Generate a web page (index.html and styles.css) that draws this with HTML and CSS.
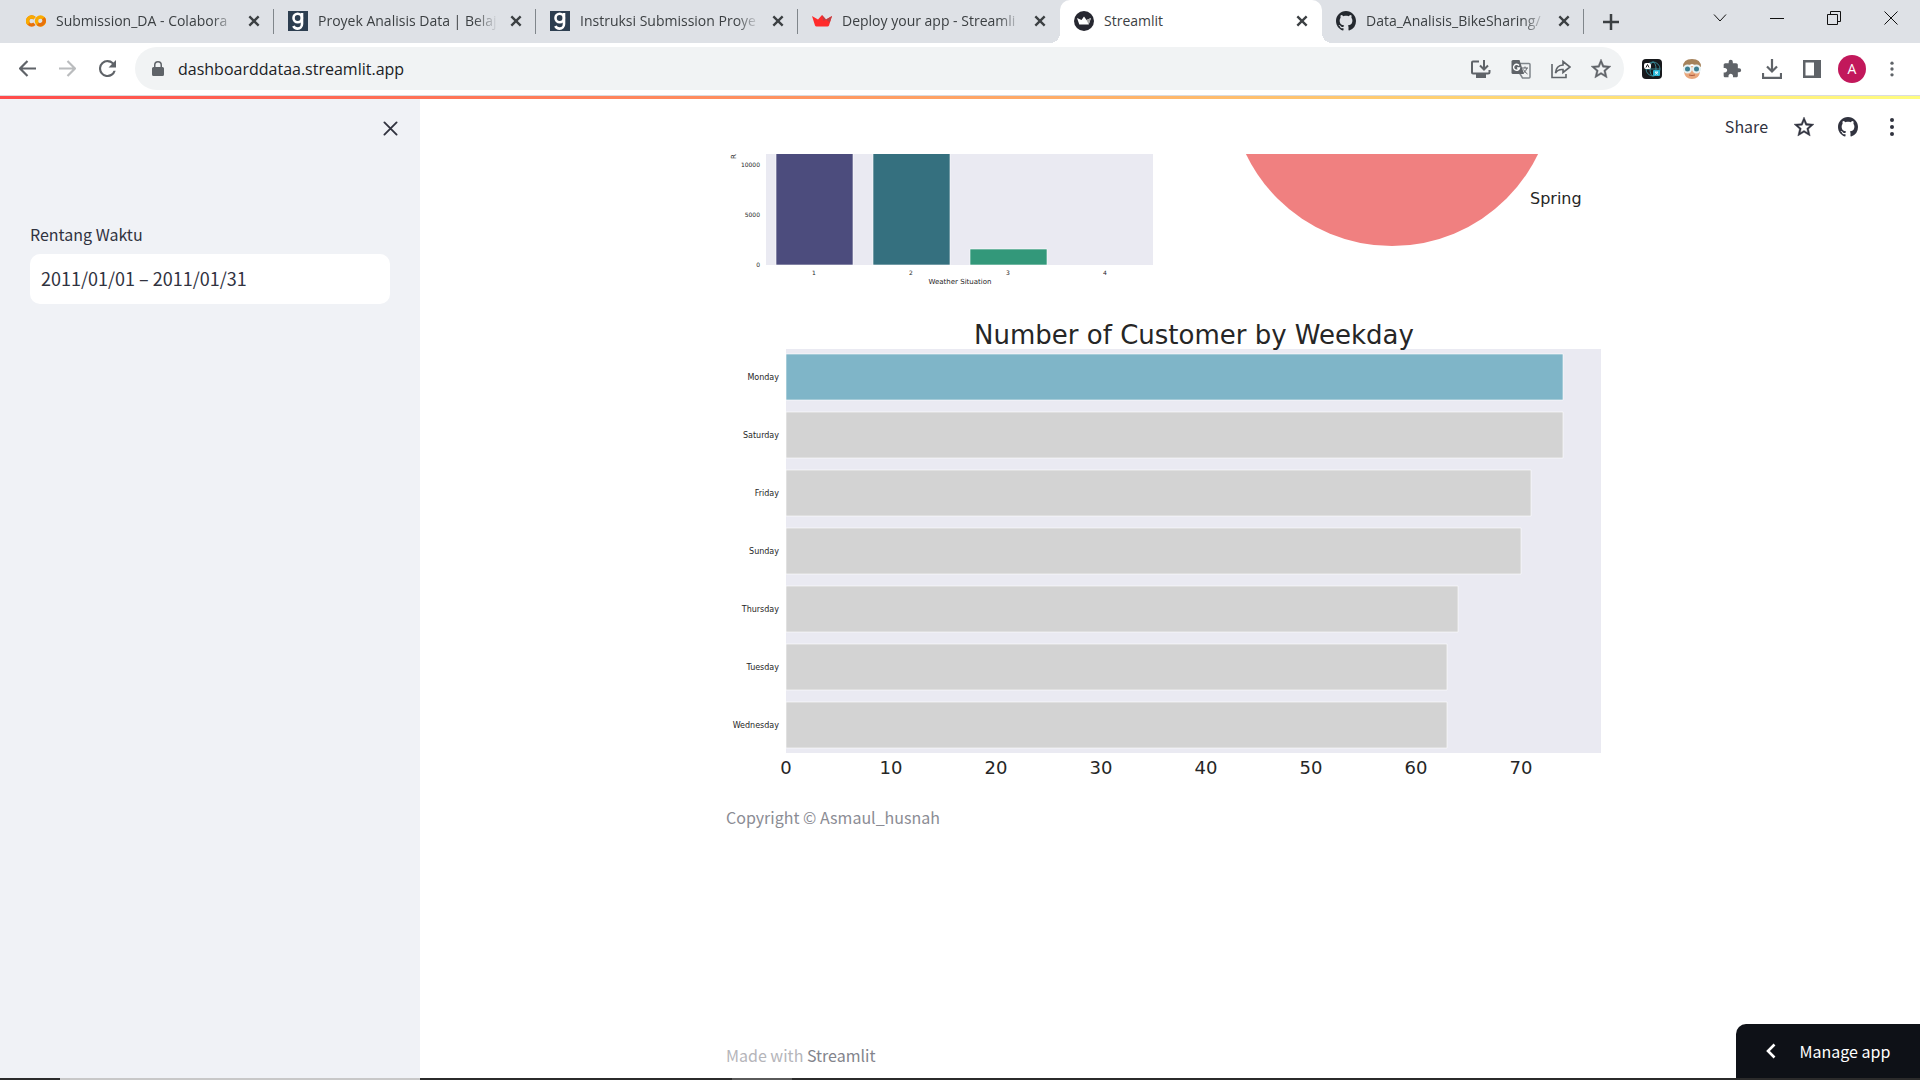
FILE: index.html
```html
<!DOCTYPE html>
<html lang="id">
<head>
<meta charset="utf-8">
<title>Streamlit</title>
<link rel="stylesheet" href="styles.css">
</head>
<body>
<svg class="defs" aria-hidden="true">
  <symbol id="x" viewBox="0 0 12 12"><path d="M2 2l8 8M10 2l-8 8" fill="none" stroke="currentColor" stroke-width="2"/></symbol>
  <symbol id="github" viewBox="0 0 16 16"><path fill="currentColor" d="M8 0C3.58 0 0 3.58 0 8c0 3.54 2.29 6.53 5.47 7.59.4.07.55-.17.55-.38 0-.19-.01-.82-.01-1.49-2.01.37-2.53-.49-2.69-.94-.09-.23-.48-.94-.82-1.13-.28-.15-.68-.52-.01-.53.63-.01 1.08.58 1.23.82.72 1.21 1.87.87 2.33.66.07-.52.28-.87.51-1.07-1.78-.2-3.64-.89-3.64-3.95 0-.87.31-1.59.82-2.15-.08-.2-.36-1.02.08-2.12 0 0 .67-.21 2.2.82.64-.18 1.32-.27 2-.27s1.36.09 2 .27c1.53-1.04 2.2-.82 2.2-.82.44 1.1.16 1.92.08 2.12.51.56.82 1.27.82 2.15 0 3.07-1.87 3.75-3.65 3.95.29.25.54.73.54 1.48 0 1.07-.01 1.93-.01 2.2 0 .21.15.46.55.38A8.01 8.01 0 0 0 16 8c0-4.42-3.58-8-8-8z"/></symbol>
  <symbol id="star" viewBox="0 0 24 24"><path fill="currentColor" stroke="currentColor" stroke-width=".4" d="M22 9.24l-7.19-.62L12 2 9.19 8.63 2 9.24l5.46 4.73L5.82 21 12 17.27 18.18 21l-1.63-7.03L22 9.24zM12 15.4l-3.76 2.27 1-4.28-3.32-2.88 4.38-.38L12 6.1l1.71 4.04 4.38.38-3.32 2.88 1 4.28L12 15.4z"/></symbol>
  <symbol id="dots" viewBox="0 0 24 24"><g fill="currentColor"><circle cx="12" cy="5" r="2"/><circle cx="12" cy="12" r="2"/><circle cx="12" cy="19" r="2"/></g></symbol>
  <symbol id="dicoding" viewBox="0 0 20 20"><path fill="#2d3e50" d="M0 0h20v20H0z"/><g fill="none" stroke="#fff" stroke-width="2.6"><circle cx="9.7" cy="7" r="4.2"/><path d="M14 2v11c0 3-2 4.600-4.300 4.600-2.200 0-3.700-1-4.300-2.600"/></g></symbol>
</svg>

<header class="browser">
  <nav class="tabs" aria-label="Tabs">
    <div class="tab"><svg class="fav" viewBox="0 0 20 20"><g fill="none" stroke-width="3.400"><circle cx="14.500" cy="10" r="4" stroke="#f9ab00"/><path d="M8.500 7.200A4 4 0 1 0 8.500 12.800" stroke="#e8710a"/><path d="M2.700 12.800A4 4 0 0 1 8.500 7.200" stroke="#f9ab00"/><path d="M17.300 7.200A4 4 0 0 1 11.700 12.800" stroke="#e8710a"/></g></svg><span class="name fade">Submission_DA - Colabora</span><button class="close" aria-label="Close tab"><svg><use href="#x"/></svg></button></div>
    <div class="tab"><svg class="fav"><use href="#dicoding"/></svg><span class="name fade">Proyek Analisis Data | Belaj</span><button class="close" aria-label="Close tab"><svg><use href="#x"/></svg></button></div>
    <div class="tab"><svg class="fav"><use href="#dicoding"/></svg><span class="name fade">Instruksi Submission Proye</span><button class="close" aria-label="Close tab"><svg><use href="#x"/></svg></button></div>
    <div class="tab last"><svg class="fav" viewBox="0 0 20 20"><path fill="#ff2b2b" d="M0 5l6 3.500 4-4.500 4 4.500L20 5l-3 9.500q-.4 1-1.500 1h-11q-1 0-1.500-1z"/><path fill="#bd4043" d="M10 4l4 4.500-2.500 1.500zM20 5l-6 3.500 3.800 3z"/></svg><span class="name fade">Deploy your app - Streamli</span><button class="close" aria-label="Close tab"><svg><use href="#x"/></svg></button></div>
    <div class="tab active"><svg class="fav" viewBox="0 0 20 20"><circle cx="10" cy="10" r="10" fill="#262730"/><path fill="#fff" d="M3 7l4.500 2L10 5.500 12.500 9 17 7l-2.300 6.500H5.300z"/><path fill="#aaa" d="M10 5.500L12.500 9l2.200 4.500L17 7l-4.500 2z"/></svg><span class="name">Streamlit</span><button class="close" aria-label="Close tab"><svg><use href="#x"/></svg></button></div>
    <div class="tab"><svg class="fav dark"><use href="#github"/></svg><span class="name fade">Data_Analisis_BikeSharing/</span><button class="close" aria-label="Close tab"><svg><use href="#x"/></svg></button></div>
    <button class="new" aria-label="New tab"><svg viewBox="0 0 16 16"><path d="M8 0v16M0 8h16" stroke="#3c4043" stroke-width="2.500"/></svg></button>
    <div class="window">
      <button aria-label="Search tabs"><svg viewBox="0 0 14 14"><path d="M1 3.500l6 6.500 6-6.500"/></svg></button>
      <button aria-label="Minimize"><svg viewBox="0 0 14 14"><path d="M0 7.500h14"/></svg></button>
      <button aria-label="Restore"><svg viewBox="0 0 14 14"><path d="M.5 3.500h10v10H.5zM3.500 3.500v-3h10v10h-3"/></svg></button>
      <button aria-label="Close"><svg viewBox="0 0 14 14"><path d="M.5.5l13 13M13.500.5l-13 13"/></svg></button>
    </div>
  </nav>
  <div class="toolbar">
    <div class="history">
      <button aria-label="Back"><svg viewBox="0 0 16 16"><path d="M16 8H1.500M8 1L1 8l7 7" fill="none" stroke="#5f6368" stroke-width="2"/></svg></button>
      <button aria-label="Forward"><svg viewBox="0 0 16 16"><path d="M0 8h14.500M8 1l7 7-7 7" fill="none" stroke="#babcbe" stroke-width="2"/></svg></button>
      <button aria-label="Reload"><svg viewBox="0 0 16 16"><path fill="#5f6368" d="M13.650 2.350A7.960 7.960 0 0 0 8 0a8 8 0 1 0 7.730 10h-2.080A6 6 0 1 1 8 2c1.660 0 3.140.69 4.220 1.780L9 7h7V0z"/></svg></button>
    </div>
    <div class="omnibox">
      <svg class="lock" viewBox="0 0 12 16"><path fill="#5f6368" d="M1.500 6H2V4a4 4 0 0 1 8 0v2h.5Q12 6 12 7.500v6q0 1.500-1.500 1.500h-9Q0 15 0 13.500v-6Q0 6 1.500 6zm2 0h5V4a2.500 2.500 0 0 0-5 0z"/></svg>
      <input class="url" aria-label="Address" value="dashboarddataa.streamlit.app">
      <button aria-label="Install"><svg viewBox="0 0 20 20"><path d="M8 2.500H2q-1 0-1 1v10q0 1 1 1h15q1.500 0 1.500-1.500v-2M13 1v9M9 6.500l4 4 4-4" fill="none" stroke="#5f6368" stroke-width="2"/><path fill="#5f6368" d="M5 15h10v4H5z"/></svg></button>
      <button aria-label="Translate"><svg viewBox="0 0 20 20"><path d="M8.500 4.500H18q1 0 1 1V18q0 1-1 1h-6.500L8.500 14" fill="none" stroke="#80868b" stroke-width="1.500"/><path fill="#5f6368" d="M2 1h6.500l4.500 14H2q-1.500 0-1.500-1.500v-11Q.5 1 2 1z"/><path d="M8 6.500A3 3 0 1 0 8.500 9H6" fill="none" stroke="#fff" stroke-width="1.400"/><path d="M11 9h6M14 7.500V9M16 9q-1 3-3.500 5M12.500 10.500q1 2.500 4 4.500" fill="none" stroke="#5f6368"/></svg></button>
      <button aria-label="Share page"><svg viewBox="0 0 20 20"><path d="M1 5v13.500h14V15M12 2.500l7 5.500-7 5.500v-3q-5-.5-7.500 3.500Q5 6.500 12 6z" fill="none" stroke="#5f6368" stroke-width="1.600"/></svg></button>
      <button aria-label="Bookmark"><svg class="grey big"><use href="#star"/></svg></button>
    </div>
    <div class="extensions">
      <button aria-label="Translator extension"><svg viewBox="0 0 20 20"><rect width="20" height="20" rx="4" fill="#17191c"/><g fill="none" stroke="#3c9aa8" stroke-width=".8"><circle cx="11" cy="10" r="7"/><ellipse cx="11" cy="10" rx="3" ry="7"/><path d="M4 10h14"/></g><rect x="2" y="4" width="7" height="6" rx="2" fill="#fff"/><path d="M4 8.500L5.500 5.500 7 8.500" fill="none" stroke="#222"/><rect x="11" y="11" width="7" height="6" rx="1" fill="#24b5d6"/><path d="M13 13h3M13 15.500l3-2.500M13 13l3 2.500" stroke="#fff" stroke-width=".8"/></svg></button>
      <button aria-label="Avatar extension"><svg viewBox="0 0 20 20"><path fill="#e9a77c" d="M2 7h16v6q-1 7-8 7t-8-7z"/><path fill="#a5825b" d="M1 8q0-8 9-8t9 8l-3-1-6-2-6 2z"/><g fill="#3e7f91" stroke="#e6f1f3" stroke-width="2"><circle cx="5.500" cy="10" r="3.500"/><circle cx="14.500" cy="10" r="3.500"/></g><path d="M7 16q3 1 6 0" fill="none" stroke="#a8573c"/></svg></button>
      <button aria-label="Extensions"><svg class="grey" viewBox="0 0 24 24"><path fill="currentColor" d="M20.500 11H19V7c0-1.100-.9-2-2-2h-4V3.500a2.500 2.500 0 0 0-5 0V5H4c-1.100 0-1.990.9-1.990 2v3.800H3.500c1.490 0 2.700 1.210 2.700 2.700s-1.210 2.700-2.700 2.700H2V20c0 1.100.9 2 2 2h3.800v-1.500c0-1.490 1.210-2.700 2.700-2.700s2.700 1.210 2.700 2.700V22H17c1.100 0 2-.9 2-2v-4h1.500a2.500 2.500 0 0 0 0-5z"/></svg></button>
      <button aria-label="Downloads"><svg viewBox="0 0 20 20"><path d="M10 0v12M5 7.500l5 5 5-5M1 14v4.800h18V14" fill="none" stroke="#5f6368" stroke-width="2.200"/></svg></button>
      <button aria-label="Side panel"><svg viewBox="0 0 20 20"><path fill="#5f6368" fill-rule="evenodd" d="M1 1h18v18H1zm2.500 2.500v13H12v-13z"/></svg></button>
      <button class="avatar" aria-label="Profile">A</button>
      <button aria-label="Menu"><svg class="grey"><use href="#dots"/></svg></button>
    </div>
  </div>
</header>

<div class="app">
  <aside class="sidebar">
    <button class="collapse" aria-label="Close sidebar"><svg viewBox="0 0 16 16"><path d="M1.500 1.500l13 13M14.500 1.500l-13 13" fill="none" stroke="#31333f" stroke-width="2" stroke-linecap="round"/></svg></button>
    <label for="range">Rentang Waktu</label>
    <input id="range" class="range" value="2011/01/01 – 2011/01/31">
  </aside>
  <main class="main">
    <div class="actions">
      <button class="share">Share</button>
      <button aria-label="Favorite"><svg class="big"><use href="#star"/></svg></button>
      <a href="#github" aria-label="GitHub"><svg><use href="#github"/></svg></a>
      <button aria-label="Main menu"><svg class="big"><use href="#dots"/></svg></button>
    </div>
    <div class="content">
      <div class="pair">
        <svg class="chart" viewBox="0 0 430 140" role="img" aria-label="Weather situation">
          <path fill="#eaeaf2" d="M40 0h387v111H40z"/>
          <g stroke="#fff" stroke-opacity=".6"><path fill="#4c4c7d" d="M50 -2h77v113H50z"/><path fill="#35707f" d="M147 -2h77v113h-77z"/><path fill="#33987a" d="M244 95h77v16h-77z"/></g>
          <g class="t6 end"><text x="34" y="13">10000</text><text x="34" y="63">5000</text><text x="34" y="113">0</text></g>
          <g class="t6 mid"><text x="88" y="121">1</text><text x="185" y="121">2</text><text x="282" y="121">3</text><text x="379" y="121">4</text></g>
          <text class="t7 mid" x="234" y="130">Weather Situation</text>
          <text class="t7" transform="translate(10 5) rotate(-90)">R</text>
        </svg>
        <svg class="chart" viewBox="0 0 430 140" role="img" aria-label="Season">
          <circle cx="216" cy="-70" r="162" fill="#f08080"/>
          <text class="t16" x="354" y="50">Spring</text>
        </svg>
      </div>
      <svg class="chart weekday" viewBox="0 0 880 470" role="img" aria-label="Number of Customer by Weekday">
        <path fill="#eaeaf2" d="M60 39h815v404H60z"/>
        <text class="t26 mid" x="468" y="34">Number of Customer by Weekday</text>
        <g fill="#d3d3d3" stroke="#fff" stroke-opacity=".6">
          <path fill="#7fb5c8" d="M60 44h777v46H60z"/>
          <path d="M60 102h777v46H60z"/>
          <path d="M60 160h745v46H60z"/>
          <path d="M60 218h735v46H60z"/>
          <path d="M60 276h672v46H60z"/>
          <path d="M60 334h661v46H60z"/>
          <path d="M60 392h661v46H60z"/>
        </g>
        <g class="t8 end"><text x="53" y="70">Monday</text><text x="53" y="128">Saturday</text><text x="53" y="186">Friday</text><text x="53" y="244">Sunday</text><text x="53" y="302">Thursday</text><text x="53" y="360">Tuesday</text><text x="53" y="418">Wednesday</text></g>
        <g class="t18 mid"><text x="60" y="464">0</text><text x="165" y="464">10</text><text x="270" y="464">20</text><text x="375" y="464">30</text><text x="480" y="464">40</text><text x="585" y="464">50</text><text x="690" y="464">60</text><text x="795" y="464">70</text></g>
      </svg>
      <p class="caption">Copyright © Asmaul_husnah</p>
    </div>
    <footer class="footer"><p>Made with <a href="#streamlit">Streamlit</a></p></footer>
    <button class="manage"><svg viewBox="0 0 10 16"><path d="M8.500 1.500L2 8l6.500 6.500" fill="none" stroke="#fff" stroke-width="2.600"/></svg>Manage app</button>
  </main>
</div>
<div class="taskbar"><i class="search"></i><i class="running"></i></div>
</body>
</html>
```

FILE: styles.css
```css
* { box-sizing: border-box; }
body {
  margin: 0;
  min-height: 100vh;
  display: flex;
  flex-direction: column;
  background: #fff;
  color: #31333f;
  font-family: "Noto Sans CJK SC", sans-serif;
  font-size: 16px;
}
button, input { font: inherit; color: inherit; border: 0; background: none; padding: 0; }
button { display: flex; align-items: center; justify-content: center; }
svg { display: block; width: 20px; height: 20px; flex: none; }
p { margin: 0; }
a { color: inherit; text-decoration: none; }
.defs { width: 0; height: 0; position: absolute; }
.grey { color: #5f6368; }
.dark { color: #24292f; }
.big { width: 24px; height: 24px; }

/* Browser window */
.browser { font-family: "Open Sans", sans-serif; color: #3c4043; }
.tabs { display: flex; height: 43px; padding-left: 12px; background: #dee1e6; }
.tab {
  display: flex;
  align-items: center;
  flex: 0 1 262px;
  min-width: 0;
  padding: 0 10px 2px 14px;
  background: linear-gradient(#80868b, #80868b) right 9px / 1px 25px no-repeat;
}
.tab.last { background: none; }
.fav { margin-right: 10px; }
.name {
  flex: 1;
  overflow: hidden;
  white-space: nowrap;
  font-size: 14px;
}
.fade { mask-image: linear-gradient(90deg, #000 calc(100% - 24px), transparent); }
.close { width: 20px; height: 20px; margin-left: 8px; }
.close svg { width: 14px; height: 14px; }
.tab.active { position: relative; background: #fff; border-radius: 10px 10px 0 0; }
.tab.active::before, .tab.active::after {
  content: "";
  position: absolute;
  bottom: 0;
  width: 10px;
  height: 10px;
}
.tab.active::before { left: -10px; background: radial-gradient(circle at 0 0, transparent 10px, #fff 10px); }
.tab.active::after { right: -10px; background: radial-gradient(circle at 100% 0, transparent 10px, #fff 10px); }
.new { width: 54px; }
.new svg { width: 16px; height: 16px; }
.window { display: flex; margin-left: auto; height: 36px; padding-right: 1px; }
.window button { width: 57px; }
.window svg { width: 14px; height: 14px; fill: none; stroke: #111; }

.toolbar { display: flex; align-items: center; gap: 8px; height: 53px; padding: 4px 14px 5px 16px; border-bottom: 1px solid #dadce0; }
.history { display: flex; width: 111px; gap: 17px; }
.history button { width: 23px; height: 24px; }
.history svg { width: 17px; height: 17px; }
.omnibox { display: flex; align-items: center; flex: 1; gap: 20px; height: 43px; padding: 0 13px 0 17px; border-radius: 22px; background: #f1f3f4; }
.omnibox button { width: 20px; height: 20px; }
.lock { width: 12px; height: 16px; }
.url { flex: 1; min-width: 0; margin-left: -6px; color: #202124; font-size: 16px; }
.extensions { display: flex; align-items: center; gap: 12px; padding-left: 6px; }
.extensions button { width: 28px; height: 28px; }
.extensions .avatar { border-radius: 50%; background: #c2185b; color: #fff; font-size: 14px; }

/* Streamlit app */
.app { display: flex; flex: 1; position: relative; padding-top: 3px; }
.app::before { content: ""; position: absolute; inset: 0 0 auto; height: 3px; background: linear-gradient(90deg, #ff4b4b, #fffd80); }
.sidebar { display: flex; flex-direction: column; flex: 0 0 420px; padding: 16px 30px; background: #f0f2f6; }
.collapse { align-self: flex-end; width: 26px; height: 26px; margin-right: -13px; }
.collapse svg { width: 15px; height: 15px; }
.sidebar label { margin-top: 81px; line-height: 24px; }
.range { height: 50px; margin-top: 8px; padding: 0 11px 2px; border-radius: 10px; background: #fff; font-size: 18px; }
.main { display: flex; flex-direction: column; flex: 1; min-width: 0; position: relative; padding-right: 8px; }
.actions { display: flex; align-items: center; justify-content: flex-end; gap: 22px; height: 55px; padding-right: 8px; }
.share { padding: 0 2px 2px 0; }
.content, .footer { width: 100%; max-width: 880px; margin: 0 auto; }
.pair { display: grid; grid-template-columns: 1fr 1fr; gap: 20px; }
.chart { width: 100%; height: auto; fill: #262626; font-family: "DejaVu Sans", sans-serif; }
.weekday { margin-top: 16px; }
.mid { text-anchor: middle; }
.end { text-anchor: end; }
.t6 { font-size: 6px; }
.t7 { font-size: 7px; }
.t8 { font-size: 8px; }
.t16 { font-size: 16px; }
.t18 { font-size: 18px; }
.t26 { font-size: 26px; }
.caption { margin-top: 25px; line-height: 24px; color: #8b8c94; }
.footer { margin-top: auto; padding-bottom: 11px; line-height: 24px; color: #b5b5ba; }
.footer a { color: #83848c; }
.manage {
  position: absolute;
  right: 0;
  bottom: 0;
  gap: 24px;
  width: 184px;
  height: 54px;
  padding-bottom: 1px;
  border-radius: 10px 0 0 0;
  background: #0e1117;
  color: #fff;
}
.manage svg { width: 10px; height: 16px; }

/* Top edge of the desktop task bar */
.taskbar { display: flex; gap: 312px; height: 2px; padding-left: 60px; background: #2b2b2b; }
.search { width: 360px; background: #c8c8c8; }
.running { width: 60px; background: #5a5a5a; }
```
